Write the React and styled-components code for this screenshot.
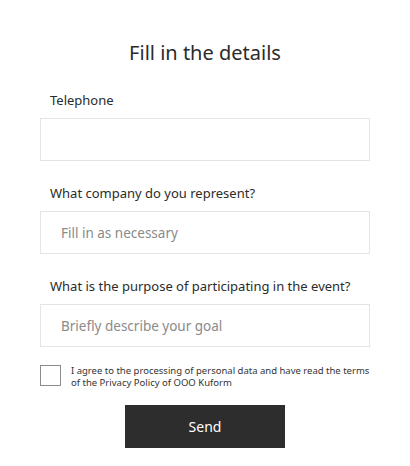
import React from 'react'
import styled, { createGlobalStyle } from 'styled-components'

const GlobalStyle = createGlobalStyle`
  body {
    margin: 0;
    background: #fff;
    font-family: "Noto Sans", "Open Sans", sans-serif;
    color: #2b2b2b;
  }
`

const fields = [
  { label: 'Telephone', placeholder: '' },
  { label: 'What company do you represent?', placeholder: 'Fill in as necessary' },
  { label: 'What is the purpose of participating in the event?', placeholder: 'Briefly describe your goal' },
]

function App() {
  return (
    <>
      <GlobalStyle />
      <Form onSubmit={(e) => e.preventDefault()}>
        <Title>Fill in the details</Title>
        {fields.map((field) => (
          <Field key={field.label}>
            <Label>{field.label}</Label>
            <Input placeholder={field.placeholder} />
          </Field>
        ))}
        <Agreement>
          <Checkbox type="checkbox" />
          <AgreementText>
            I agree to the processing of personal data and have read the terms of the Privacy Policy of OOO Kuform
          </AgreementText>
        </Agreement>
        <SendButton type="submit">Send</SendButton>
      </Form>
    </>
  )
}

const Form = styled.form`
  width: 330px;
  margin: 0 0 0 40px;
  padding-top: 40px;
  display: flex;
  flex-direction: column;
`
const Title = styled.h2`
  margin: 0 0 24px;
  font-size: 20px;
  font-weight: 400;
  text-align: center;
  line-height: 26px;
  color: #2b2b2b;
`
const Field = styled.div`
  display: flex;
  flex-direction: column;
  margin-bottom: 22px;
`
const Label = styled.label`
  padding-left: 10px;
  font-size: 13px;
  line-height: 20px;
  margin-bottom: 8px;
  color: #2b2b2b;
`
const Input = styled.input`
  box-sizing: border-box;
  height: 43px;
  width: 100%;
  border: 1px solid #e4e4e4;
  padding: 0 20px;
  font-family: inherit;
  font-size: 13.5px;
  color: #2b2b2b;
  outline: none;
  &::placeholder {
    color: #8a8a8a;
  }
`
const Agreement = styled.label`
  display: flex;
  align-items: flex-start;
  gap: 10px;
  margin-top: -4px;
`
const Checkbox = styled.input`
  appearance: none;
  flex: none;
  width: 21px;
  height: 21px;
  margin: 0;
  border: 1px solid #8c8c8c;
  background: #fff;
`
const AgreementText = styled.span`
  font-size: 9.5px;
  line-height: 12px;
  color: #333;
`
const SendButton = styled.button`
  align-self: center;
  margin-top: 16px;
  width: 160px;
  height: 43px;
  border: none;
  background: #2d2d2d;
  color: #fff;
  font-family: inherit;
  font-size: 14px;
  cursor: pointer;
`

export default App
